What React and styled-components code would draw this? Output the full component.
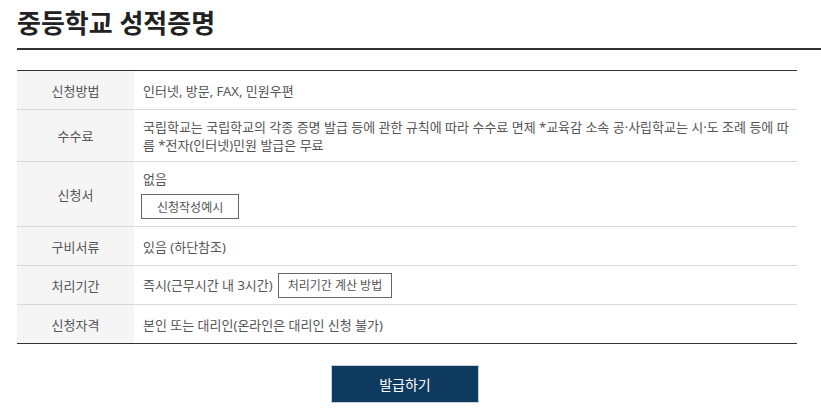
import React from "react";
import styled, { createGlobalStyle } from "styled-components";

const Global = createGlobalStyle`
  html, body { margin: 0; padding: 0; background: #fff; }
  body { font-family: "Noto Sans", "Noto Sans CJK KR", sans-serif; color: #555; }
  * { box-sizing: border-box; }
`;

const Page = styled.div`
  padding: 0 0 0 17px;
  width: 821px;
  overflow: hidden;
`;

const Title = styled.h2`
  margin: 0;
  padding: 6px 0 8px;
  font-size: 26px;
  line-height: 34px;
  font-weight: 700;
  color: #222;
  letter-spacing: 0;
  border-bottom: 2px solid #333;
`;

const Table = styled.div`
  margin-top: 20px;
  width: 780px;
  border-top: 1px solid #333;
  border-bottom: 1px solid #333;
`;

const Row = styled.div`
  display: grid;
  grid-template-columns: 117px 1fr;
  border-top: ${(p) => (p.first ? "none" : "1px solid #d9d9d9")};
`;

const Th = styled.div`
  background: #f5f5f5;
  display: flex;
  align-items: center;
  justify-content: center;
  min-height: 38px;
  font-size: 13px;
  color: #555;
`;

const Td = styled.div`
  display: flex;
  flex-direction: column;
  justify-content: center;
  align-items: flex-start;
  padding: ${(p) => (p.dense ? "6px 8px 6px 9px" : "8px 8px 7px 9px")};
  font-size: 13px;
  line-height: 18px;
  color: #555;
`;

const Line = styled.div`
  display: flex;
  align-items: center;
  gap: 5px;
`;

const SmallButton = styled.button`
  margin-top: ${(p) => (p.stacked ? "6px" : "0")};
  margin-left: ${(p) => (p.stacked ? "-2px" : "0")};
  height: 25px;
  padding: 0 ${(p) => p.pad || 12}px;
  border: 1px solid #666;
  background: #fff;
  color: #555;
  font-family: inherit;
  font-size: 12px;
  cursor: pointer;
`;

const Actions = styled.div`
  width: 780px;
  display: flex;
  justify-content: center;
  padding-top: 21px;
`;

const PrimaryButton = styled.button`
  width: 148px;
  height: 38px;
  margin-left: -4px;
  background: #0f3a60;
  border: 1px solid #c5d0da;
  color: #fff;
  font-family: inherit;
  font-size: 14px;
  cursor: pointer;
`;

export default function App() {
  return (
    <>
      <Global />
      <Page>
        <Title>중등학교 성적증명</Title>
        <Table>
          <Row first>
            <Th>신청방법</Th>
            <Td>인터넷, 방문, FAX, 민원우편</Td>
          </Row>
          <Row>
            <Th>수수료</Th>
            <Td>
              국립학교는 국립학교의 각종 증명 발급 등에 관한 규칙에 따라 수수료 면제 *교육감 소속 공·사립학교는 시·도 조례 등에 따름 *전자(인터넷)민원 발급은 무료
            </Td>
          </Row>
          <Row>
            <Th>신청서</Th>
            <Td>
              <div>없음</div>
              <SmallButton stacked pad={15}>신청작성예시</SmallButton>
            </Td>
          </Row>
          <Row>
            <Th>구비서류</Th>
            <Td>있음 (하단참조)</Td>
          </Row>
          <Row>
            <Th>처리기간</Th>
            <Td dense>
              <Line>
                <span>즉시(근무시간 내 3시간)</span>
                <SmallButton pad={9}>처리기간 계산 방법</SmallButton>
              </Line>
            </Td>
          </Row>
          <Row>
            <Th>신청자격</Th>
            <Td>본인 또는 대리인(온라인은 대리인 신청 불가)</Td>
          </Row>
        </Table>
        <Actions>
          <PrimaryButton>발급하기</PrimaryButton>
        </Actions>
      </Page>
    </>
  );
}
